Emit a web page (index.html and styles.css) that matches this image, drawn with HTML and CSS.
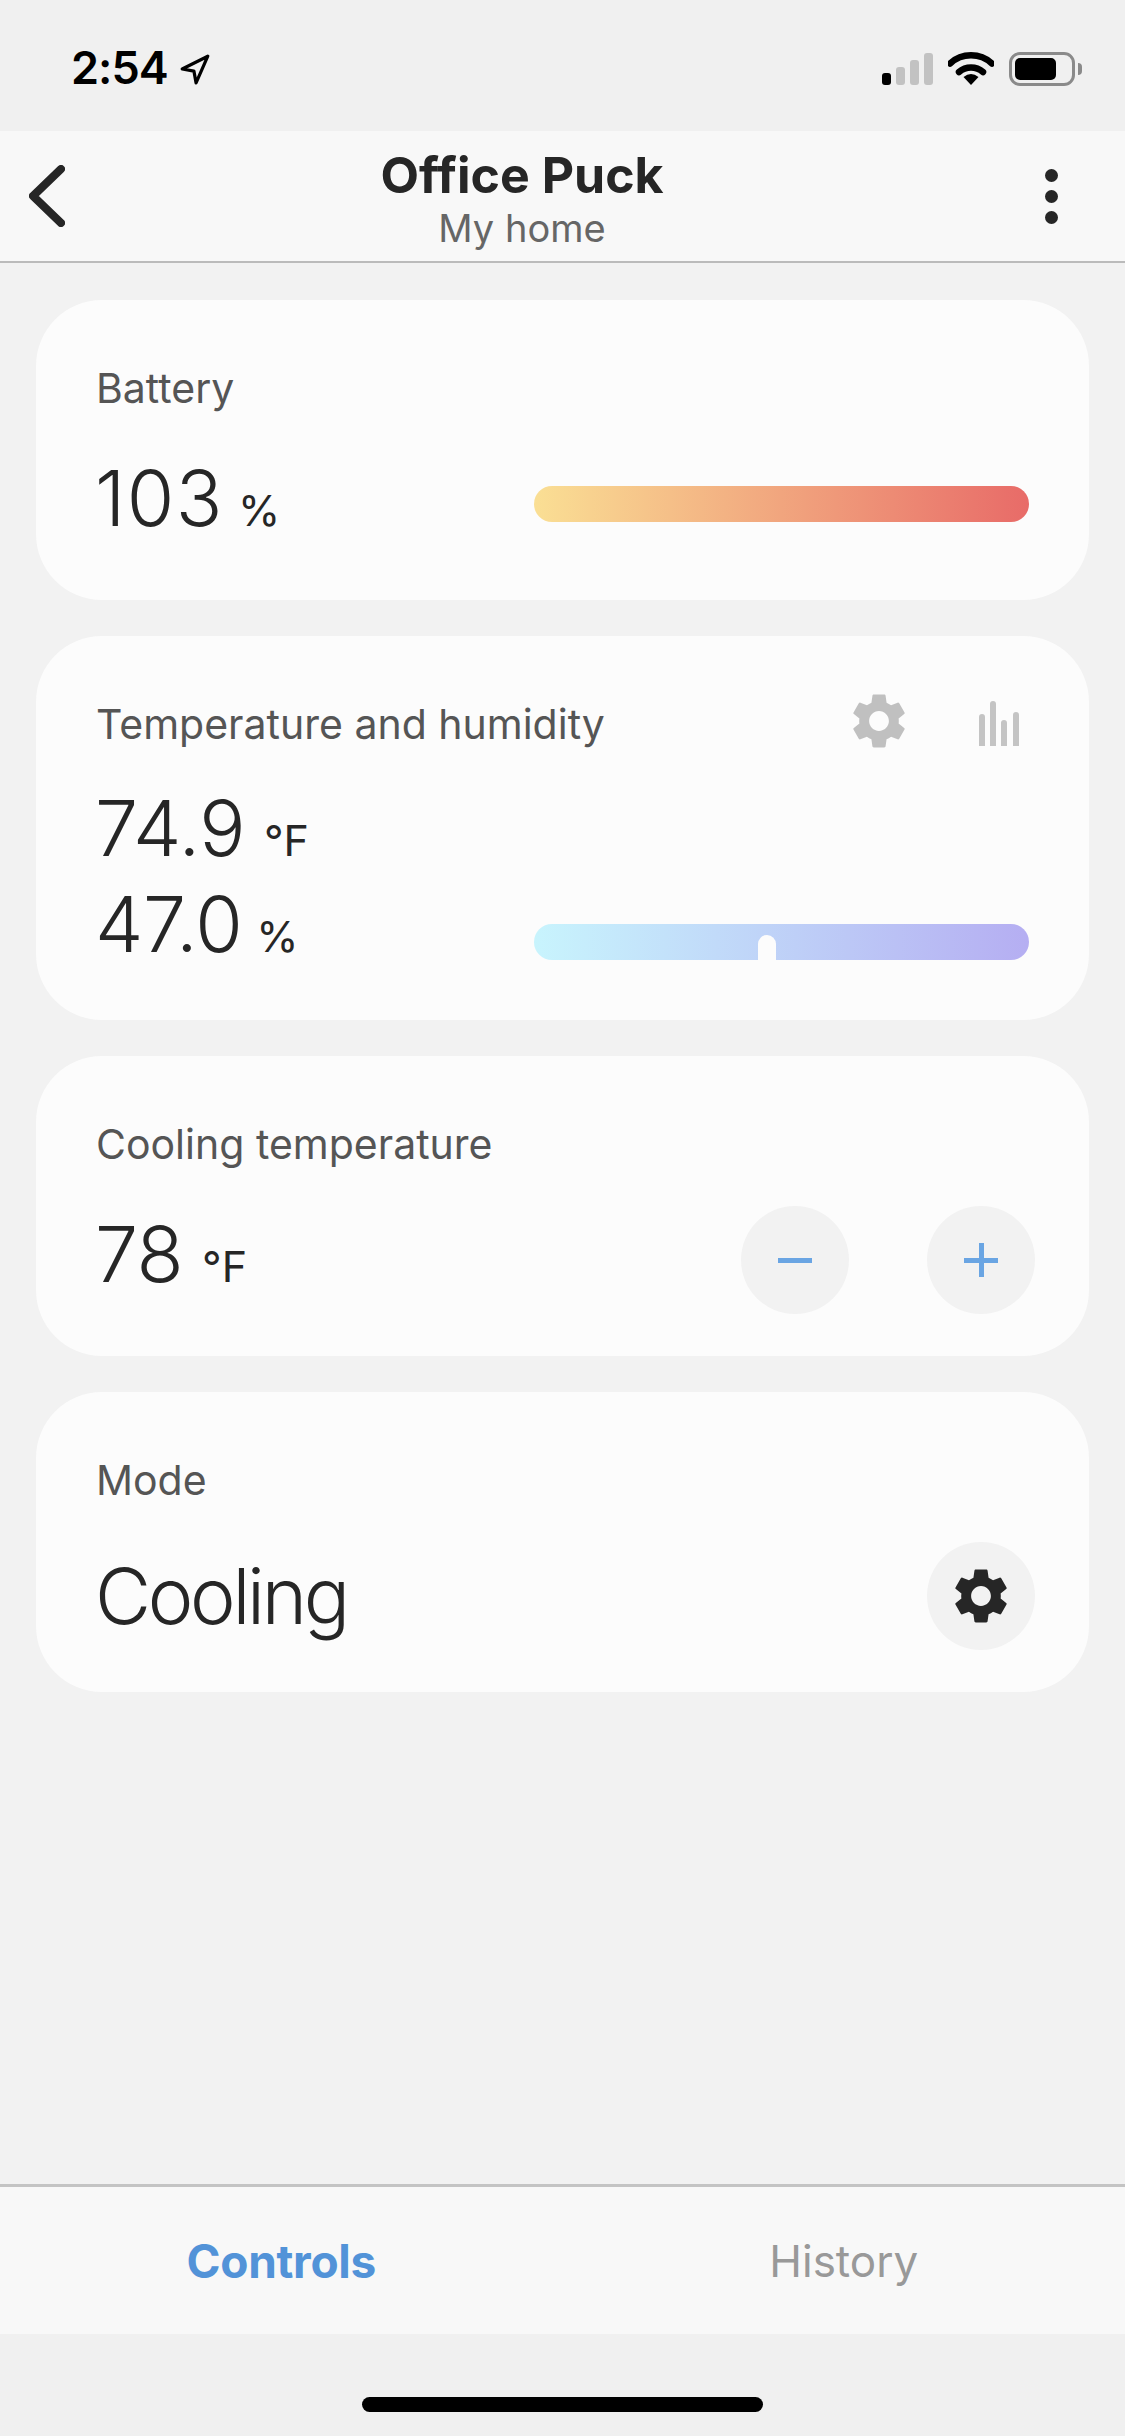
FILE: index.html
```html
<!DOCTYPE html>
<html lang="en">
<head>
  <meta charset="UTF-8" />
  <title>Office Puck</title>
  <link rel="stylesheet" href="styles.css">
</head>
<body>
  <div class="status-bar">
    <span class="clock">2:54</span>
    <svg class="loc-arrow" viewBox="0 0 30 30"><path d="M27 3 L3 15 L14 17 L16 28 Z" fill="none" stroke="#000" stroke-width="3" stroke-linejoin="round"/></svg>
    <div class="status-icons">
      <div class="signal">
        <span class="sig-bar sig-1 sig-on"></span>
        <span class="sig-bar sig-2"></span>
        <span class="sig-bar sig-3"></span>
        <span class="sig-bar sig-4"></span>
      </div>
      <svg class="wifi" viewBox="0 0 46 33">
        <path d="M2 11.5 A31 31 0 0 1 44 11.5" fill="none" stroke="#000" stroke-width="6.5" stroke-linecap="round"/>
        <path d="M11 20 A18 18 0 0 1 35 20" fill="none" stroke="#000" stroke-width="6.5" stroke-linecap="round"/>
        <path d="M15.5 25 Q23 19 30.5 25 L23 33 Z" fill="#000"/>
      </svg>
      <div class="battery"><span class="battery-level"></span></div>
      <span class="battery-cap"></span>
    </div>
  </div>

  <div class="nav-bar">
    <div class="nav-back">
      <svg width="36" height="62" viewBox="0 0 36 62"><path d="M32 4 L4 31 L32 58" fill="none" stroke="#262626" stroke-width="8" stroke-linecap="round" stroke-linejoin="round"/></svg>
    </div>
    <div class="nav-title">
      <div class="title">Office Puck</div>
      <div class="subtitle">My home</div>
    </div>
    <div class="nav-more">
      <span class="dot"></span>
      <span class="dot"></span>
      <span class="dot"></span>
    </div>
  </div>

  <main class="content">
    <section class="card">
      <div class="card-head"><span class="label">Battery</span></div>
      <div class="row">
        <div class="value value-num value-wide">103<span class="unit unit-pct">%</span></div>
        <div class="bar bar-battery"></div>
      </div>
    </section>

    <section class="card">
      <div class="card-head">
        <span class="label">Temperature and humidity</span>
        <div class="head-icons">
          <svg class="gear-sm" viewBox="0 0 24 24"><path fill="#c0c0c0" d="M19.14 12.94c.04-.3.06-.61.06-.94 0-.32-.02-.64-.07-.94l2.03-1.58c.18-.14.23-.41.12-.61l-1.92-3.32c-.12-.22-.37-.29-.59-.22l-2.39.96c-.5-.38-1.03-.7-1.62-.94l-.36-2.54c-.04-.24-.24-.41-.48-.41h-3.84c-.24 0-.43.17-.47.41l-.36 2.54c-.59.24-1.13.57-1.62.94l-2.39-.96c-.22-.08-.47 0-.59.22L2.74 8.87c-.12.21-.08.47.12.61l2.03 1.58c-.05.3-.09.63-.09.94s.02.64.07.94l-2.03 1.58c-.18.14-.23.41-.12.61l1.92 3.32c.12.22.37.29.59.22l2.39-.96c.5.38 1.03.7 1.62.94l.36 2.54c.05.24.24.41.48.41h3.84c.24 0 .44-.17.47-.41l.36-2.54c.59-.24 1.13-.56 1.62-.94l2.39.96c.22.08.47 0 .59-.22l1.92-3.32c.12-.22.07-.47-.12-.61l-2.01-1.58zM12 15.6c-1.98 0-3.6-1.62-3.6-3.6s1.62-3.6 3.6-3.6 3.6 1.62 3.6 3.6-1.62 3.6-3.6 3.6z"/></svg>
          <svg class="chart" viewBox="0 0 40 45">
            <path fill="#c4c4c4" d="M0 16 a3 3 0 0 1 6 0 V45 H0 Z M11 3 a3 3 0 0 1 6 0 V45 H11 Z M22 22 a3 3 0 0 1 6 0 V45 H22 Z M34 14 a3 3 0 0 1 6 0 V45 H34 Z"/>
          </svg>
        </div>
      </div>
      <div class="row-sm">
        <div class="value value-num">74.9<span class="unit">°F</span></div>
      </div>
      <div class="row-sm">
        <div class="value value-num">47.0<span class="unit unit-pct">%</span></div>
        <div class="bar bar-humid"><span class="marker"></span></div>
      </div>
    </section>

    <section class="card">
      <div class="card-head"><span class="label">Cooling temperature</span></div>
      <div class="row">
        <div class="value value-num">78<span class="unit">°F</span></div>
        <div class="btn-group">
          <div class="round-btn"><span class="sign sign-h"></span></div>
          <div class="round-btn"><span class="sign sign-h"></span><span class="sign sign-v"></span></div>
        </div>
      </div>
    </section>

    <section class="card">
      <div class="card-head"><span class="label">Mode</span></div>
      <div class="row">
        <div class="value">Cooling</div>
        <div class="btn-group">
          <div class="round-btn">
            <svg class="gear-lg" viewBox="0 0 24 24"><path fill="#262626" d="M19.14 12.94c.04-.3.06-.61.06-.94 0-.32-.02-.64-.07-.94l2.03-1.58c.18-.14.23-.41.12-.61l-1.92-3.32c-.12-.22-.37-.29-.59-.22l-2.39.96c-.5-.38-1.03-.7-1.62-.94l-.36-2.54c-.04-.24-.24-.41-.48-.41h-3.84c-.24 0-.43.17-.47.41l-.36 2.54c-.59.24-1.13.57-1.62.94l-2.39-.96c-.22-.08-.47 0-.59.22L2.74 8.87c-.12.21-.08.47.12.61l2.03 1.58c-.05.3-.09.63-.09.94s.02.64.07.94l-2.03 1.58c-.18.14-.23.41-.12.61l1.92 3.32c.12.22.37.29.59.22l2.39-.96c.5.38 1.03.7 1.62.94l.36 2.54c.05.24.24.41.48.41h3.84c.24 0 .44-.17.47-.41l.36-2.54c.59-.24 1.13-.56 1.62-.94l2.39.96c.22.08.47 0 .59-.22l1.92-3.32c.12-.22.07-.47-.12-.61l-2.01-1.58zM12 15.6c-1.98 0-3.6-1.62-3.6-3.6s1.62-3.6 3.6-3.6 3.6 1.62 3.6 3.6-1.62 3.6-3.6 3.6z"/></svg>
          </div>
        </div>
      </div>
    </section>
  </main>

  <div class="tab-bar">
    <div class="tab tab-active">Controls</div>
    <div class="tab">History</div>
  </div>
  <div class="home-area"><span class="home-bar"></span></div>
</body>
</html>
```

FILE: styles.css
```css
* { box-sizing: border-box; }
html, body { margin: 0; height: 100%; }
body { display: flex; flex-direction: column; height: 2436px; background: #f2f2f2; font-family: Inter, Roboto, "Liberation Sans", sans-serif; color: #262626; }

/* status bar */
.status-bar { height: 131px; background: #f0f0f0; display: flex; align-items: flex-start; padding: 44px 43px 0 71px; }
.clock { font-size: 45px; font-weight: 600; line-height: 48px; color: #000; letter-spacing: -1px; }
.loc-arrow { width: 32px; height: 32px; margin: 9px 0 0 11px; }
.status-icons { margin-left: auto; display: flex; align-items: flex-start; padding-top: 8px; }
.signal { display: flex; align-items: flex-end; gap: 5px; height: 33px; margin-right: 15px; }
.sig-bar { width: 9px; background: #c2c2c2; border-radius: 3px; }
.sig-1 { height: 12px; }
.sig-2 { height: 18px; }
.sig-3 { height: 25px; }
.sig-4 { height: 32px; }
.sig-on { background: #000; }
.wifi { width: 46px; height: 33px; margin-right: 15px; }
.battery { width: 66px; height: 34px; border: 3px solid #8a8a8a; border-radius: 11px; padding: 3px; }
.battery-level { display: block; width: 41px; height: 22px; background: #000; border-radius: 5px; }
.battery-cap { width: 4px; height: 12px; background: #8a8a8a; border-radius: 0 4px 4px 0; margin: 11px 0 0 3px; }

/* nav */
.nav-bar { height: 132px; background: #f8f8f8; border-bottom: 2px solid #bbb; display: flex; align-items: center; }
.nav-back { width: 84px; padding-left: 29px; display: flex; }
.nav-title { flex: 1; text-align: center; }
.title { font-size: 50px; font-weight: 700; line-height: 54px; color: #262626; margin-top: 6px; }
.subtitle { font-size: 38px; line-height: 46px; color: #666; margin-top: 3px; }
.nav-more { width: 165px; padding-right: 67px; display: flex; flex-direction: column; align-items: flex-end; gap: 8px; }
.dot { width: 13px; height: 13px; border-radius: 50%; background: #262626; }

/* cards */
.content { flex: 1; padding: 37px 36px 0; display: flex; flex-direction: column; gap: 36px; }
.card { background: #fcfcfc; border-radius: 66px; padding: 58px 60px 42px 60px; }
.card-head { height: 60px; margin-bottom: 32px; display: flex; align-items: center; justify-content: space-between; }
.label { font-size: 41px; line-height: 58px; color: #555; }
.head-icons { display: flex; align-items: center; gap: 67px; margin-right: 10px; margin-top: -6px; }
.gear-sm { width: 66px; height: 66px; }
.chart { width: 40px; height: 45px; margin-top: 4px; }
.row { height: 108px; display: flex; align-items: center; justify-content: space-between; }
.row-sm { height: 96px; display: flex; align-items: center; justify-content: space-between; }
.value { font-size: 77px; font-weight: 300; line-height: 96px; letter-spacing: -3.3px; margin-left: -1px; color: #262626; }
.value-num { letter-spacing: -0.5px; }
.value-wide { letter-spacing: 1.5px; }
.unit { font-size: 43px; font-weight: 400; margin-left: 19px; letter-spacing: 0; }
.unit-pct { margin-left: 14px; }
.bar { position: relative; width: 495px; height: 36px; border-radius: 18px; }
.bar-battery { background: linear-gradient(to right, #fadf94, #e86b68); }
.bar-humid { background: linear-gradient(to right, #c8f4fd, #b5aef2); margin-top: 24px; }
.marker { position: absolute; left: 224px; bottom: 0; width: 18px; height: 25px; background: #fcfcfc; border-radius: 9px 9px 0 0; }

/* round buttons */
.btn-group { display: flex; gap: 78px; margin-right: -6px; }
.round-btn { position: relative; width: 108px; height: 108px; border-radius: 50%; background: #f2f2f2; display: flex; align-items: center; justify-content: center; }
.sign { position: absolute; background: #6aa5e3; }
.sign-h { width: 34px; height: 5px; }
.sign-v { width: 5px; height: 34px; }
.gear-lg { width: 66px; height: 66px; }

/* tabs */
.tab-bar { height: 150px; background: #f8f8f8; border-top: 3px solid #c4c4c4; display: flex; align-items: center; }
.tab { flex: 1; text-align: center; font-size: 44px; color: #999; }
.tab-active { color: #5293d8; font-weight: 700; font-size: 46px; letter-spacing: -0.3px; }
.home-area { height: 102px; background: #f0f0f0; padding-top: 63px; display: flex; justify-content: center; align-items: flex-start; }
.home-bar { width: 401px; height: 15px; background: #000; border-radius: 8px; }
```
